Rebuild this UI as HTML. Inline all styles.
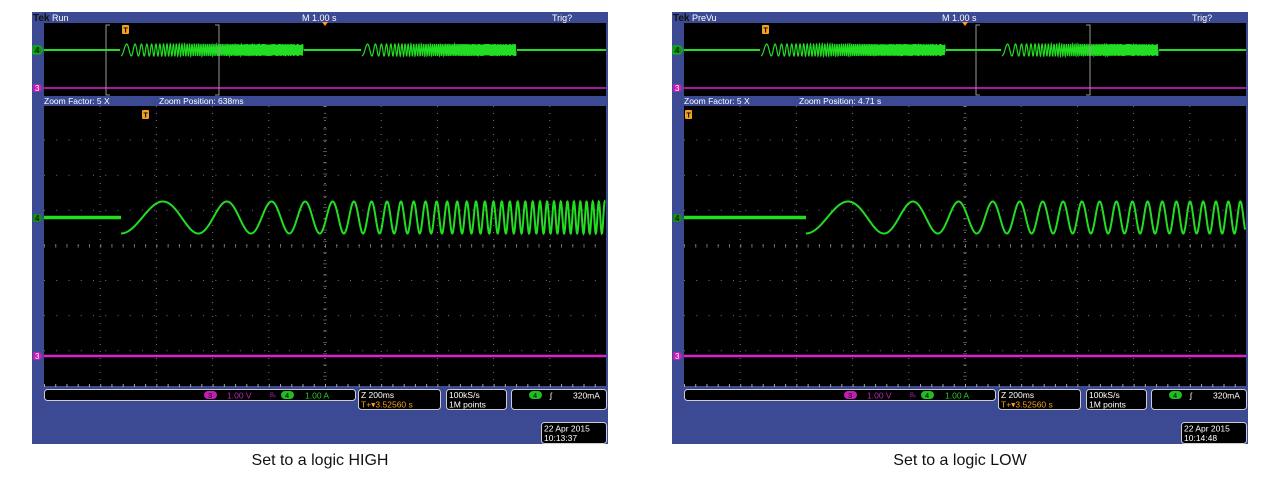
<!DOCTYPE html>
<html><head><meta charset="utf-8">
<style>
html,body{margin:0;padding:0;background:#fff;width:1280px;height:480px;overflow:hidden}
svg{position:absolute;left:0;top:0}
text{font-family:"Liberation Sans",sans-serif}
.cap{position:absolute;top:452px;width:400px;text-align:center;font:16px "Liberation Sans",sans-serif;color:#111}
</style></head><body>
<svg id="s" width="1280" height="480" xmlns="http://www.w3.org/2000/svg"></svg>
<div class="cap" style="left:120px">Set to a logic HIGH</div>
<div class="cap" style="left:760px">Set to a logic LOW</div>
<script>
const S=document.getElementById('s');let h='';
function interp(t,r){for(let i=1;i<t.length;i++){if(r<=t[i][0]){const a=t[i-1],b=t[i];return a[1]+(b[1]-a[1])*(r-a[0])/(b[0]-a[0]);}}return t[t.length-1][1];}
function chirp(x0,x1,cy,amp,tab){
  let d='',ph=-Math.PI/2;
  for(let x=x0;x<=x1;x+=0.25){
    const f=interp(tab,x-x0);
    ph+=2*Math.PI*f*0.25;
    d+=(d?'L':'M')+x.toFixed(2)+' '+(cy-amp*Math.sin(ph)).toFixed(2);
  }
  return d;
}
function ochirp(x0,x1,cy,amp){
  let d='',ph=-Math.PI/2;const L=x1-x0;
  for(let x=x0;x<=x1;x+=0.25){const r=(x-x0)/L;const f=0.07+r*0.9;ph+=2*Math.PI*f*0.25;
    d+=(d?'L':'M')+x.toFixed(2)+' '+(cy-amp*Math.sin(ph)).toFixed(2);}
  return d;
}
function scope(o,o2){
  const X=v=>v+o;
  h+=`<rect x="${X(32)}" y="12" width="576" height="432" fill="#3b4a93"/>`;
  h+=`<text x="${X(33)}" y="21" font-size="10" font-weight="bold" fill="#111">Tek</text>`;
  h+=`<text x="${X(52)}" y="21" font-size="9" fill="#fff">${o2.mode}</text>`;
  h+=`<text x="${X(302)}" y="21" font-size="9" fill="#fff">M 1.00 s</text>`;
  h+=`<text x="${X(552)}" y="21" font-size="9" fill="#fff">Trig?</text>`;
  h+=`<rect x="${X(44)}" y="23" width="562" height="73" fill="#000"/>`;
  h+=`<path d="M${X(322)} 22 l6 0 l-3 4z" fill="#f5a020"/>`;
  h+=`<path d="M${X(44)} 50H${X(606)}" stroke="#22dd22" stroke-width="2"/>`;
  o2.ov.forEach(c=>{h+=`<rect x="${X(c[0])-1}" y="43" width="${c[1]-c[0]+2}" height="14" fill="#000"/>`;
    h+=`<path d="${ochirp(X(c[0]),X(c[1]),50,6)}" stroke="#22dd22" stroke-width="1.2" fill="none"/>`;});
  h+=`<path d="M${X(44)} 88H${X(606)}" stroke="#e020d0" stroke-width="1.5"/>`;
  const b=o2.br;h+=`<path d="M${X(b[0])+4} 25H${X(b[0])}V95H${X(b[0])+4} M${X(b[1])-4} 25H${X(b[1])}V95H${X(b[1])-4}" stroke="#999" fill="none"/>`;
  h+=`<rect x="${X(o2.ot)}" y="25" width="7" height="9" rx="1" fill="#f5a020"/><text x="${X(o2.ot)+1.5}" y="32.5" font-size="7" font-weight="bold" fill="#000">T</text>`;
  h+=`<path d="M${X(33)} 46h7l3 4l-3 4h-7z" fill="#1a8a1a" stroke="#0c0"/><text x="${X(35)}" y="53" font-size="8" fill="#000">4</text>`;
  h+=`<path d="M${X(33)} 84h7l3 4l-3 4h-7z" fill="#c020b0"/><text x="${X(35)}" y="91" font-size="8" fill="#fff">3</text>`;
  h+=`<text x="${X(44)}" y="104" font-size="8.5" fill="#fff">Zoom Factor: 5 X</text>`;
  h+=`<text x="${X(159)}" y="104" font-size="8.5" fill="#fff">Zoom Position: ${o2.zp}</text>`;
  h+=`<rect x="${X(44)}" y="106" width="562" height="280" fill="#000"/>`;
  for(let i=1;i<10;i++){const gx=X(44+i*56.2);h+=`<path d="M${gx} 106V386" stroke="${i==5?'#bbb':'#777'}" stroke-dasharray="1 6" stroke-width="1"/>`;}
  for(let j=1;j<8;j++){const gy=105+j*35.1;h+=`<path d="M${X(44)} ${gy}H${X(606)}" stroke="${j==4?'#bbb':'#777'}" stroke-dasharray="1 ${j==4?10.24:11.24}" stroke-width="1"/>`;}
  h+=`<path d="M${X(325)} 106V386M${X(44)} 246H${X(606)}" stroke="#888" stroke-dasharray="1 10.24" stroke-width="4" opacity=".6"/>`;
  h+=`<path d="M${X(44)} 385.5H${X(606)}" stroke="#aaa" stroke-dasharray="1 10.24" stroke-width="3"/>`;
  h+=`<path d="M${X(44)} 217.5H${X(o2.cs)}" stroke="#22dd22" stroke-width="3.5"/>`;
  h+=`<path d="${chirp(X(o2.cs),X(605),217.5,16,o2.tab)}" stroke="#22dd22" stroke-width="2" fill="none"/>`;
  h+=`<path d="M${X(44)} 356H${X(606)}" stroke="#e020d0" stroke-width="2.5"/>`;
  h+=`<rect x="${X(o2.mt)}" y="110" width="7" height="9" rx="1" fill="#f5a020"/><text x="${X(o2.mt)+1.5}" y="117.5" font-size="7" font-weight="bold" fill="#000">T</text>`;
  h+=`<path d="M${X(33)} 214h7l3 4l-3 4h-7z" fill="#1a8a1a"/><text x="${X(35)}" y="221" font-size="8" fill="#000">4</text>`;
  h+=`<path d="M${X(33)} 352h7l3 4l-3 4h-7z" fill="#c020b0"/><text x="${X(35)}" y="359" font-size="8" fill="#fff">3</text>`;
  h+=`<rect x="${X(44.5)}" y="389.5" width="311" height="11" rx="3" fill="#000" stroke="#ccc"/>`;
  h+=`<rect x="${X(204)}" y="391" width="13" height="8" rx="4" fill="#c020b0"/><text x="${X(208)}" y="398" font-size="7.5" fill="#000">3</text>`;
  h+=`<text x="${X(227)}" y="398.5" font-size="8.5" fill="#c020c0">1.00 V</text>`;
  h+=`<text x="${X(270)}" y="397" font-size="6" fill="#c020c0">Bᵥ</text>`;
  h+=`<rect x="${X(281)}" y="391" width="13" height="8" rx="4" fill="#22bb22"/><text x="${X(285)}" y="398" font-size="7.5" fill="#000">4</text>`;
  h+=`<text x="${X(305)}" y="398.5" font-size="8.5" fill="#22cc22">1.00 A</text>`;
  h+=`<rect x="${X(358.5)}" y="389.5" width="82" height="20" rx="3" fill="#000" stroke="#ccc"/>`;
  h+=`<text x="${X(361)}" y="398" font-size="8.5" fill="#fff">Z 200ms</text>`;
  h+=`<text x="${X(361)}" y="407.5" font-size="8.5" fill="#f5a020">T+▾3.52560 s</text>`;
  h+=`<rect x="${X(446.5)}" y="389.5" width="60" height="20" rx="3" fill="#000" stroke="#ccc"/>`;
  h+=`<text x="${X(449)}" y="398" font-size="8.5" fill="#fff">100kS/s</text><text x="${X(449)}" y="407.5" font-size="8.5" fill="#fff">1M points</text>`;
  h+=`<rect x="${X(511.5)}" y="389.5" width="95" height="20" rx="3" fill="#000" stroke="#ccc"/>`;
  h+=`<rect x="${X(529)}" y="391" width="13" height="8" rx="4" fill="#22bb22"/><text x="${X(533)}" y="398" font-size="7.5" fill="#000">4</text>`;
  h+=`<text x="${X(550)}" y="398.5" font-size="8.5" fill="#fff">ʃ</text><text x="${X(573)}" y="398.5" font-size="8.5" fill="#fff">320mA</text>`;
  h+=`<rect x="${X(541.5)}" y="422.5" width="65" height="21" rx="3" fill="#000" stroke="#ccc"/>`;
  h+=`<text x="${X(544)}" y="431.5" font-size="8.5" fill="#fff">22 Apr  2015</text><text x="${X(544)}" y="441" font-size="8.5" fill="#fff">${o2.tm}</text>`;
}
scope(0,{mode:'Run',ov:[[121,303],[362,516]],br:[106,219],ot:122,zp:'638ms',cs:121,mt:142,tm:'10:13:37',
 tab:[[0,.0114],[40,.0123],[76,.0156],[130,.0222],[170,.0303],[200,.036],[310,.09],[486,.17]]});
scope(640,{mode:'PreVu',ov:[[121,305],[362,518]],br:[336,450],ot:122,zp:'4.71 s',cs:166,mt:45,tm:'10:14:48',
 tab:[[0,.0114],[44,.0123],[120,.02],[170,.029],[250,.05],[440,.085]]});
S.innerHTML=h;
</script>
</body></html>
